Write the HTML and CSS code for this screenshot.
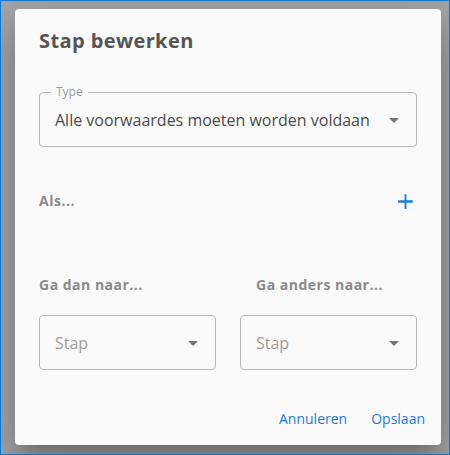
FILE: index.html
```html
<!DOCTYPE html>
<html lang="nl">
<head>
<meta charset="utf-8">
<link rel="stylesheet" href="styles.css">
</head>
<body>
<div class="dialog">
  <h2 class="title">Stap bewerken</h2>
  <div class="field field-type">
    <span class="field-label">Type</span>
    <span class="field-value">Alle voorwaardes moeten worden voldaan</span>
    <svg class="arrow" viewBox="0 0 24 24" width="24" height="24"><path d="M7 10l5 5 5-5z"/></svg>
  </div>
  <div class="cond-row">
    <span class="section-label">Als...</span>
    <svg class="plus" viewBox="0 0 24 24" width="25" height="25"><path d="M19 13.2h-6.1v6h-1.8v-6H5v-2.4h6.1V5h1.8v5.8h6.1v2.4z"/></svg>
  </div>
  <div class="goto">
    <div class="goto-col">
      <span class="section-label">Ga dan naar...</span>
      <div class="field">
        <span class="field-placeholder">Stap</span>
        <svg class="arrow" viewBox="0 0 24 24" width="24" height="24"><path d="M7 10l5 5 5-5z"/></svg>
      </div>
    </div>
    <div class="goto-col">
      <span class="section-label indent">Ga anders naar...</span>
      <div class="field">
        <span class="field-placeholder">Stap</span>
        <svg class="arrow" viewBox="0 0 24 24" width="24" height="24"><path d="M7 10l5 5 5-5z"/></svg>
      </div>
    </div>
  </div>
  <div class="actions">
    <button class="btn">Annuleren</button>
    <button class="btn">Opslaan</button>
  </div>
</div>
</body>
</html>
```

FILE: styles.css
```css
html, body {
  margin: 0;
  padding: 0;
}
body {
  width: 450px;
  height: 455px;
  box-sizing: border-box;
  border: 1px solid #0a78d4;
  background: #a6a6a6;
  padding: 8px 0 0 14px;
  font-family: "Open Sans", "Noto Sans", sans-serif;
  overflow: hidden;
}
.dialog {
  width: 426px;
  height: 436px;
  box-sizing: border-box;
  background: #fafafa;
  border-radius: 4px;
  box-shadow: 0 11px 15px -7px rgba(0,0,0,.2), 0 24px 38px 3px rgba(0,0,0,.14), 0 9px 46px 8px rgba(0,0,0,.12);
  padding: 16px 24px 0;
  display: flex;
  flex-direction: column;
}
.title {
  margin: 0;
  font-size: 20px;
  line-height: 32px;
  font-weight: 700;
  letter-spacing: 0.4px;
  color: #555;
}
.field {
  position: relative;
  height: 55px;
  box-sizing: border-box;
  border: 1px solid #b8b8b8;
  border-radius: 4px;
  display: flex;
  align-items: center;
  padding: 0 10px 0 15px;
}
.field-type {
  margin-top: 35px;
}
.field-label {
  position: absolute;
  left: 11px;
  top: -9px;
  padding: 0 5px 0 5px;
  background: #fafafa;
  font-size: 12px;
  line-height: 16px;
  color: #9a9a9a;
}
.field-value {
  flex: 1;
  font-size: 16px;
  color: #4a4a4a;
}
.field-placeholder {
  flex: 1;
  font-size: 16px;
  color: #9e9e9e;
}
.arrow {
  fill: #767676;
  flex: none;
}
.cond-row {
  margin-top: 44px;
  display: flex;
  justify-content: space-between;
  align-items: center;
  height: 20px;
}
.section-label {
  font-size: 14px;
  line-height: 20px;
  font-weight: 700;
  letter-spacing: 0.5px;
  color: #8a8a8a;
}
.plus {
  fill: #1a7ad9;
  margin-right: -1px;
}
.goto {
  margin-top: 64px;
  display: grid;
  grid-template-columns: 1fr 1fr;
  column-gap: 24px;
}
.goto-col {
  display: flex;
  flex-direction: column;
  gap: 20px;
}
.indent {
  padding-left: 16px;
}
.actions {
  margin-top: auto;
  margin-right: -16px;
  padding: 8px 0;
  display: flex;
  justify-content: flex-end;
  gap: 8px;
}
.btn {
  border: 0;
  background: none;
  padding: 6px 8px;
  font-family: "Open Sans", "Noto Sans", sans-serif;
  font-size: 14px;
  line-height: 24px;
  color: #1a7ad9;
}
```
